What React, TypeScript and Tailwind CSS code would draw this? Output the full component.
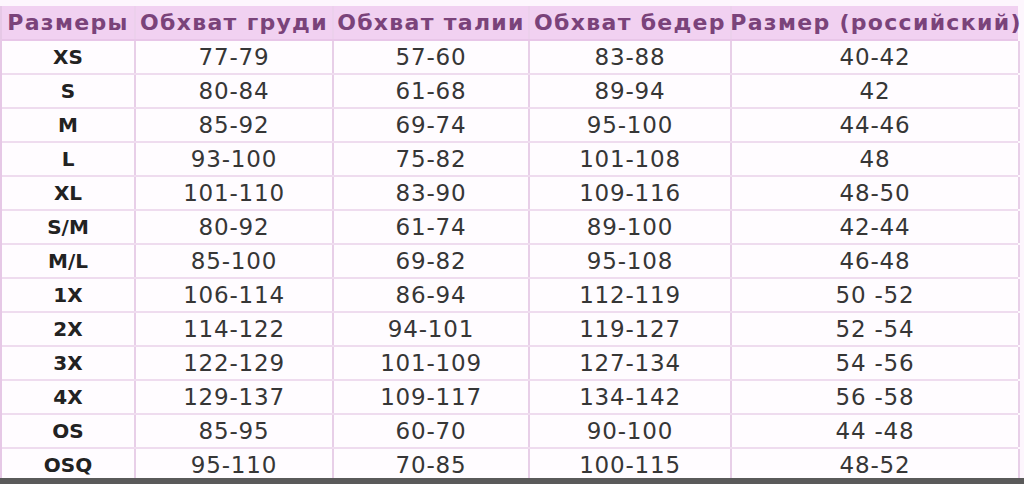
import React from "react";

const headers = ["Размеры", "Обхват груди", "Обхват талии", "Обхват бедер", "Размер (российский)"];
const rows: string[][] = [
  ["XS", "77-79", "57-60", "83-88", "40-42"],
  ["S", "80-84", "61-68", "89-94", "42"],
  ["M", "85-92", "69-74", "95-100", "44-46"],
  ["L", "93-100", "75-82", "101-108", "48"],
  ["XL", "101-110", "83-90", "109-116", "48-50"],
  ["S/M", "80-92", "61-74", "89-100", "42-44"],
  ["M/L", "85-100", "69-82", "95-108", "46-48"],
  ["1X", "106-114", "86-94", "112-119", "50 -52"],
  ["2X", "114-122", "94-101", "119-127", "52 -54"],
  ["3X", "122-129", "101-109", "127-134", "54 -56"],
  ["4X", "129-137", "109-117", "134-142", "56 -58"],
  ["OS", "85-95", "60-70", "90-100", "44 -48"],
  ["OSQ", "95-110", "70-85", "100-115", "48-52"],
];

const cols = "grid grid-cols-[134px_198px_196px_202px_288px]";

export default function App() {
  return (
    <div className="w-[1024px] h-[484px] overflow-hidden bg-[#fdf6fd] flex flex-col" style={{ fontFamily: '"DejaVu Sans", Verdana, sans-serif' }}>
      <div className="flex-1 pt-[6px]">
        <div className="w-[1018px] border-l-2 border-[#e6c8e6]">
          <div className={`${cols} h-[35px] bg-[#f1d1f1] border-b-2 border-[#e8c6e8]`}>
            {headers.map((h, i) => (
              <div key={i} className="flex items-center justify-center text-[22px] leading-[26px] font-bold text-[#7a437a] whitespace-nowrap tracking-[1.3px] border-r-2 border-[#ecd0ec] last:border-r-0">
                {h}
              </div>
            ))}
          </div>
          {rows.map((r, ri) => {
            const last = ri === rows.length - 1;
            return (
              <div
                key={ri}
                className={`${cols} bg-[#fffcff] ${last ? "h-[29px]" : "h-[34px] border-b-2 border-[#efdcef]"}`}
              >
                {r.map((c, ci) => (
                  <div
                    key={ci}
                    className={`flex justify-center whitespace-nowrap border-r-2 border-[#e8cfe8] leading-[22px] ${
                      last ? "items-start pt-[5px]" : "items-center"
                    } ${ci === 0 ? "text-[20px] font-bold text-[#222]" : "text-[23px] tracking-[0.8px] text-[#363636]"}`}
                  >
                    {c}
                  </div>
                ))}
              </div>
            );
          })}
        </div>
      </div>
      <div className="h-[7px] bg-[#5a5a5a]" />
    </div>
  );
}
